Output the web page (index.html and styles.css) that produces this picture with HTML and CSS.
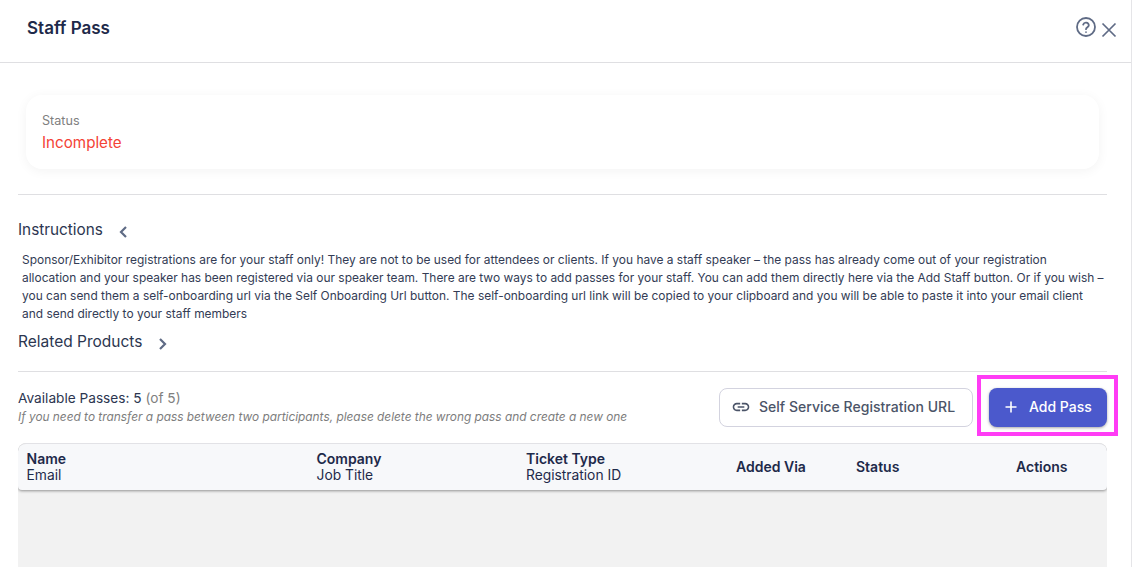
FILE: index.html
```html
<!DOCTYPE html>
<html>
  <head>
    <title>Staff Pass</title>
    <link rel="stylesheet" href="styles.css">
  </head>
  <body>
    <div class="panel">
      <header class="topbar">
        <h1>Staff Pass</h1>
        <div class="topicons">
          <svg class="help" width="22" height="22" viewBox="0 0 22 22" fill="none" stroke="#5f6b85" stroke-width="1.8">
            <circle cx="11" cy="11" r="9"/>
            <path d="M8.2 8.6a2.9 2.9 0 0 1 5.6 .6c0 1.9-2.8 2.1-2.8 4" stroke-linecap="round"/>
            <path d="M11 15.4v1.3"/>
          </svg>
          <svg class="close" width="16" height="16" viewBox="0 0 16 16" fill="none" stroke="#5f6b85" stroke-width="1.7">
            <path d="M1.5 1.5l13 13M14.5 1.5l-13 13"/>
          </svg>
        </div>
      </header>

      <main class="content">
        <div class="statuscard">
          <div class="statuslabel">Status</div>
          <div class="statusvalue">Incomplete</div>
        </div>
        <hr class="divider first">

        <div class="toggle instructions">
          <span>Instructions</span>
          <svg width="10" height="14" viewBox="0 0 10 14" fill="none" stroke="#5f6b85" stroke-width="2.2"><path d="M8 2L3 7l5 5"/></svg>
        </div>
        <p class="helptext">Sponsor/Exhibitor registrations are for your staff only! They are not to be used for attendees or clients. If you have a staff speaker – the pass has already come out of your registration<br>allocation and your speaker has been registered via our speaker team. There are two ways to add passes for your staff. You can add them directly here via the Add Staff button. Or if you wish – you can send them a self-onboarding url via the Self Onboarding Url button. The self-onboarding url link will be copied to your clipboard and you will be able to paste it into your email client and send directly to your staff members</p>
        <div class="toggle related">
          <span>Related Products</span>
          <svg width="10" height="14" viewBox="0 0 10 14" fill="none" stroke="#5f6b85" stroke-width="2.2"><path d="M2 2l5 5-5 5"/></svg>
        </div>
        <hr class="divider second">

        <div class="passbar">
          <div>
            <div class="available">Available Passes: 5 <span>(of 5)</span></div>
            <div class="note">If you need to transfer a pass between two participants, please delete the wrong pass and create a new one</div>
          </div>
          <div class="actions">
            <button class="btn outline" type="button">
              <svg width="20" height="20" viewBox="0 0 24 24" fill="#4b5468"><path d="M3.9 12c0-1.71 1.39-3.1 3.1-3.1h4V7H7c-2.76 0-5 2.24-5 5s2.24 5 5 5h4v-1.9H7c-1.71 0-3.1-1.39-3.1-3.1zM8 13h8v-2H8v2zm9-6h-4v1.9h4c1.71 0 3.1 1.39 3.1 3.1s-1.39 3.1-3.1 3.1h-4V17h4c2.76 0 5-2.24 5-5s-2.24-5-5-5z"/></svg>
              Self Service Registration URL
            </button>
            <button class="btn primary" type="button">
              <svg width="14" height="14" viewBox="0 0 14 14" fill="none" stroke="#fff" stroke-width="1.6"><path d="M7 1.5v11M1.5 7h11"/></svg>
              Add Pass
            </button>
            <div class="highlight"></div>
          </div>
        </div>

        <div class="passtable">
          <div class="tablehead">
            <div class="col name"><b>Name</b>Email</div>
            <div class="col company"><b>Company</b>Job Title</div>
            <div class="col ticket"><b>Ticket Type</b>Registration ID</div>
            <div class="col via"><b>Added Via</b></div>
            <div class="col state"><b>Status</b></div>
            <div class="col acts"><b>Actions</b></div>
          </div>
          <div class="tablebody"></div>
        </div>
      </main>
    </div>
  </body>
</html>
```

FILE: styles.css
```css
html, body {
  margin: 0;
  height: 100%;
  overflow: hidden;
  background: #fff;
  font-family: Inter, "Liberation Sans", sans-serif;
  color: #1e2a4a;
}
.panel {
  height: 567px;
  margin-right: 1px;
  border-right: 1px solid #e5e5e8;
  overflow: hidden;
}
.topbar {
  height: 62px;
  border-bottom: 1px solid #dfdfe2;
  display: flex;
  justify-content: space-between;
  padding: 0 14px 0 27px;
}
h1 {
  margin: 19px 0 0;
  font-size: 17px;
  line-height: 19px;
  font-weight: 600;
}
.topicons {
  display: flex;
  gap: 4px;
  padding-top: 16px;
}
.close {
  margin-top: 6px;
}
.content {
  padding: 32px 24px 0 18px;
}
.statuscard {
  margin: 0 8px;
  height: 74px;
  box-sizing: border-box;
  padding: 18px 16px;
  border-radius: 16px;
  background: #fff;
  box-shadow: 0 2px 12px rgba(0, 0, 0, 0.05);
}
.statuslabel {
  font-size: 12.6px;
  line-height: 15px;
  color: #808080;
}
.statusvalue {
  margin-top: 5px;
  font-size: 15.2px;
  line-height: 20px;
  color: #f44336;
}
.divider {
  margin: 0;
  border: 0;
  border-top: 1px solid #dfdfe2;
}
.divider.first {
  margin-top: 25px;
}
.divider.second {
  margin-top: 19px;
}
.toggle {
  display: flex;
  align-items: center;
  gap: 15px;
  font-size: 15.3px;
  line-height: 20px;
  color: #2c3650;
}
.toggle svg {
  margin-top: 3px;
}
.instructions {
  margin-top: 25px;
}
.helptext {
  margin: 11px 0 0 4px;
  font-size: 11.95px;
  line-height: 18px;
  color: #333c55;
}
.related {
  margin-top: 9px;
  font-size: 15.5px;
  gap: 16px;
}
.passbar {
  display: flex;
  justify-content: space-between;
  margin-top: 16px;
}
.available {
  margin-top: 2px;
  font-size: 13.66px;
  line-height: 17px;
  color: #2c3650;
}
.available span {
  color: #808080;
}
.note {
  margin-top: 3px;
  font-size: 11.86px;
  line-height: 15px;
  font-style: italic;
  color: #7d7d7d;
}
.actions {
  position: relative;
  display: flex;
  gap: 16px;
}
.btn {
  display: flex;
  align-items: center;
  height: 39px;
  box-sizing: border-box;
  border-radius: 8px;
  font-family: inherit;
  font-size: 14px;
  font-weight: 500;
}
.outline {
  width: 254px;
  padding: 0 0 2px 11px;
  gap: 8px;
  background: #fff;
  border: 1px solid #d3d3df;
  color: #4b5468;
  letter-spacing: 0.02px;
}
.primary {
  width: 118px;
  padding: 0 0 2px 15px;
  gap: 11px;
  background: #4b59cc;
  border: 0;
  color: #fff;
  box-shadow: 0 1px 3px rgba(0, 0, 0, 0.35);
}
.highlight {
  position: absolute;
  left: 258px;
  top: -13px;
  width: 141px;
  height: 61px;
  box-sizing: border-box;
  border: 4px solid #ff3cf5;
}
.passtable {
  margin-top: 16px;
  height: 130px;
  border-radius: 8px 8px 0 0;
  background: #f2f2f2;
  overflow: hidden;
}
.tablehead {
  display: grid;
  grid-template-columns: 290px 209.5px 210px 120px 160px 1fr;
  align-items: center;
  height: 47px;
  box-sizing: border-box;
  padding-left: 8.5px;
  border-top: 1px solid #e2e2e6;
  border-radius: 8px 8px 4px 4px;
  background: #f7f8fa;
  box-shadow: 0 1px 3px rgba(0, 0, 0, 0.4);
  font-size: 13.8px;
  line-height: 16px;
  color: #1e2a4a;
}
.col b {
  display: block;
  font-size: 14px;
  font-weight: 600;
}
```
